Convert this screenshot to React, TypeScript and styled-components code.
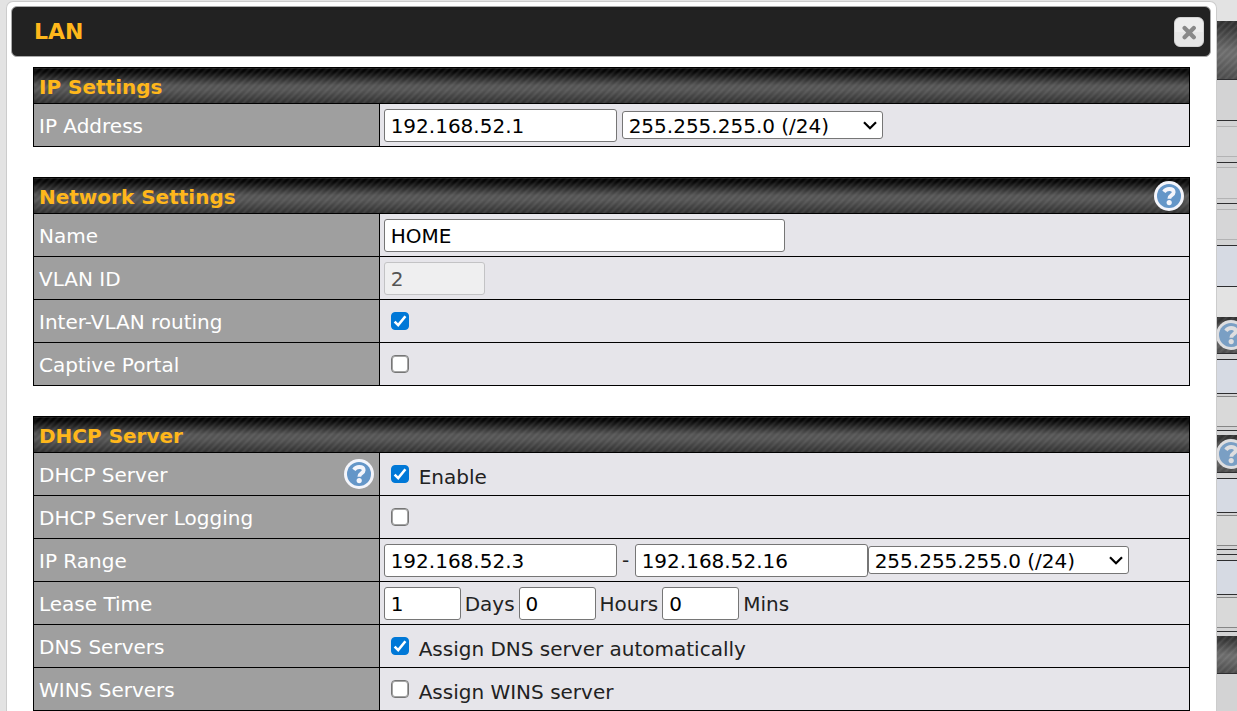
import React from 'react';
import styled, { createGlobalStyle, css } from 'styled-components';

const GlobalStyle = createGlobalStyle`
  *, *::before, *::after { box-sizing: border-box; }
  body {
    margin: 0;
    background: #e3e3e3;
    color: #222;
    font-family: Verdana, 'DejaVu Sans', sans-serif;
    font-size: 20px;
    line-height: 24px;
  }
`;

const stripes = 'repeating-linear-gradient(135deg, transparent 0, rgba(255, 255, 255, 0.09) 2px, transparent 4px, transparent 5px)';

const brushedMetal = css`
  background: ${stripes}, linear-gradient(#000 0%, #060606 10%, #535353 48%, #535353 62%, #2e2e2e 100%);
`;

const Page = styled.div`
  display: grid;
  grid-template-columns: 6px minmax(0, 1fr) 20px;
  min-height: 100vh;
`;

const Dialog = styled.section`
  grid-column: 2;
  margin-top: 1px;
  padding: 4px 5px 0 4px;
  background: #fff;
  border: 1px solid #ccc;
  border-bottom: 0;
  border-radius: 7px 7px 0 0;
`;

const TitleBar = styled.header`
  display: flex;
  align-items: center;
  justify-content: space-between;
  height: 51px;
  padding: 0 6px 0 22px;
  background: #222;
  border: 1px solid #aaa;
  border-radius: 6px;
`;

const Title = styled.h1`
  margin: 0;
  color: #ffb71b;
  font-size: 22px;
  font-weight: 700;
`;

const CloseButton = styled.button`
  display: flex;
  align-items: center;
  justify-content: center;
  width: 30px;
  height: 30px;
  padding: 0;
  background: linear-gradient(#ededed 50%, #e6e6e6 50%);
  border: 1px solid #d3d3d3;
  border-radius: 6px;
`;

const Content = styled.main`
  display: flex;
  flex-direction: column;
  gap: 30px;
  padding: 10px 21px 0 22px;
`;

const Table = styled.table`
  width: 100%;
  table-layout: fixed;
  border-collapse: collapse;
`;

const LabelColumn = styled.col`
  width: 29.9%;
`;

const SectionHeading = styled.th`
  height: 36px;
  padding: 0 5px;
  border: 1px solid #000;
  color: #ffb71b;
  text-align: left;
  ${brushedMetal}
`;

const LabelCell = styled.th`
  height: 43px;
  padding: 0 5px;
  border: 1px solid #000;
  background: #9f9f9f;
  color: #fff;
  font-weight: 400;
  text-align: left;
`;

const FieldCell = styled.td`
  padding: 0 4px;
  border: 1px solid #000;
  background: #e6e5ea;
`;

const Spread = styled.div`
  display: flex;
  align-items: center;
  justify-content: space-between;
`;

const Caption = styled.span`
  padding-top: 2px;
`;

const Fields = styled.div<{ $gap?: number }>`
  display: flex;
  align-items: center;
  gap: ${({ $gap = 5 }) => $gap}px;
`;

const Unit = styled.label`
  padding-top: 2px;
`;

const Dash = styled.span`
  width: 8px;
  text-align: center;
`;

const HelpButton = styled.button`
  display: flex;
  padding: 0;
  background: none;
  border: 0;
`;

const TextInput = styled.input<{ $width: number }>`
  width: ${({ $width }) => $width}px;
  height: 33px;
  padding: 2px 6px 0;
  background: #fff;
  border: 1px solid #767676;
  border-radius: 3px;
  color: #000;
  font: inherit;

  &:disabled {
    background: #efeff0;
    border-color: #c3c3c5;
    color: #545454;
  }
`;

const SelectBox = styled.div`
  position: relative;
  display: flex;

  svg {
    position: absolute;
    top: 10px;
    right: 6px;
    pointer-events: none;
  }
`;

const Select = styled.select`
  appearance: none;
  width: 261px;
  height: 28px;
  padding: 2px 6px 0;
  background: #fff;
  border: 1px solid #767676;
  border-radius: 3px;
  color: #000;
  font: inherit;
`;

const CheckRow = styled.div`
  display: flex;
  align-items: center;
  gap: 10px;
  padding-left: 7px;
`;

const CheckBoxFrame = styled.span`
  display: grid;

  > * {
    grid-area: 1 / 1;
  }

  svg {
    pointer-events: none;
  }
`;

const CheckboxInput = styled.input`
  appearance: none;
  width: 18px;
  height: 18px;
  margin: 0;
  background: #fff;
  border: 1px solid #767676;
  border-radius: 4px;
  box-shadow: inset 0 0 0 1px #a5a5a5;

  &:checked {
    background: #0078d7;
    border-color: #0078d7;
    box-shadow: none;
  }

  &:not(:checked) + svg {
    visibility: hidden;
  }
`;

const CheckLabel = styled.label`
  padding-top: 6px;
`;

const Backdrop = styled.div`
  display: flex;
  flex-direction: column;
  overflow: hidden;
  background: #d3d3d4;
`;

const Block = styled.div<{ $height: number; $fill: string; $line?: string }>`
  flex: none;
  height: ${({ $height }) => $height}px;
  background: ${({ $fill }) => $fill};
  ${({ $line }) => $line && `border-bottom: 1px solid ${$line};`}
`;

const BackdropHeader = styled.div<{ $height: number }>`
  flex: none;
  display: flex;
  align-items: center;
  height: ${({ $height }) => $height}px;
  overflow: hidden;
  border-bottom: 1px solid #2e2e30;
  background: ${stripes}, linear-gradient(#303030 0%, #353535 10%, #6a6a6a 50%, #6a6a6a 60%, #4b4b4b 100%);

  svg {
    flex: none;
  }
`;

function HelpIcon({ muted = false }: { muted?: boolean }) {
  const ring = muted ? '#dedee0' : '#f4f5fb';
  return (
    <svg width="30" height="30" viewBox={muted ? '1 0 30 30' : '0 0 30 30'} aria-hidden="true">
      <circle cx="15" cy="15" r="15" fill={ring} />
      <circle cx="15" cy="15" r="12" fill={muted ? '#7a9fc4' : '#6496c8'} />
      <path
        d="M9.9 10.9C11.2 8.9 13 8 15.2 8C17.9 8 19.7 9.3 19.7 11.3C19.7 14.3 15.3 14 15.3 17.8"
        fill="none"
        stroke={ring}
        strokeWidth="3.8"
      />
      <circle cx="15.2" cy="21.6" r="2.6" fill={ring} />
    </svg>
  );
}

function Help({ topic }: { topic: string }) {
  return (
    <HelpButton type="button" aria-label={`Help: ${topic}`}>
      <HelpIcon />
    </HelpButton>
  );
}

function Checkbox({ id, defaultChecked }: { id: string; defaultChecked?: boolean }) {
  return (
    <CheckBoxFrame>
      <CheckboxInput type="checkbox" id={id} defaultChecked={defaultChecked} />
      <svg width="18" height="18" viewBox="0 0 18 18" aria-hidden="true">
        <path d="M3.6 9.6L7.2 13.1L14.4 4.2" fill="none" stroke="#fff" strokeWidth="2.6" />
      </svg>
    </CheckBoxFrame>
  );
}

function Section({ title, help, children }: { title: string; help?: boolean; children: React.ReactNode }) {
  return (
    <Table>
      <colgroup>
        <LabelColumn />
        <col />
      </colgroup>
      <thead>
        <tr>
          <SectionHeading colSpan={2} scope="colgroup">
            <Spread>
              <Caption>{title}</Caption>
              {help && <Help topic={title} />}
            </Spread>
          </SectionHeading>
        </tr>
      </thead>
      <tbody>{children}</tbody>
    </Table>
  );
}

type RowProps = { label: string; htmlFor?: string; help?: boolean; children: React.ReactNode };

function Row({ label, htmlFor, help, children }: RowProps) {
  return (
    <tr>
      <LabelCell scope="row">
        <Spread>
          <Caption>{htmlFor ? <label htmlFor={htmlFor}>{label}</label> : label}</Caption>
          {help && <Help topic={label} />}
        </Spread>
      </LabelCell>
      <FieldCell>{children}</FieldCell>
    </tr>
  );
}

function MaskSelect({ label }: { label: string }) {
  return (
    <SelectBox>
      <Select aria-label={label} defaultValue="24">
        <option value="24">255.255.255.0 (/24)</option>
      </Select>
      <svg width="14" height="9" viewBox="0 0 14 9" aria-hidden="true">
        <path d="M1 1.2L7 7.2L13 1.2" fill="none" stroke="#000" strokeWidth="2.2" />
      </svg>
    </SelectBox>
  );
}

const dark = '#2e2e30';
const light = '#b3b3b4';
const mid = '#868686';
const blue = '#d6dae3';
const pale = '#e3e3e3';
const band = '#d3d3d4';
const cell = '#d6d6d7';
const field = '#d9d9d9';

type Part = { h: number; fill?: string; line?: string; header?: boolean; icon?: boolean };

const backdropParts: Part[] = [
  { h: 21, fill: pale },
  { h: 59, header: true },
  { h: 41, line: dark },
  { h: 6, line: light },
  { h: 30, fill: cell, line: light },
  { h: 6, line: dark },
  { h: 5, line: light },
  { h: 31, fill: cell, line: light },
  { h: 5, line: dark },
  { h: 6, line: light },
  { h: 30, fill: cell, line: light },
  { h: 6, line: dark },
  { h: 41, fill: blue, line: dark },
  { h: 30, fill: pale },
  { h: 37, header: true, icon: true },
  { h: 6, line: dark },
  { h: 34, fill: blue, line: dark },
  { h: 3, line: mid },
  { h: 30, fill: field, line: mid },
  { h: 4, line: dark },
  { h: 4 },
  { h: 38, header: true, icon: true },
  { h: 6, line: dark },
  { h: 34, fill: blue, line: dark },
  { h: 3, line: mid },
  { h: 30, fill: field, line: mid },
  { h: 4, line: dark },
  { h: 5, line: dark },
  { h: 6, line: dark },
  { h: 34, fill: blue, line: dark },
  { h: 3, line: mid },
  { h: 30, fill: field, line: mid },
  { h: 4, line: dark },
  { h: 4 },
  { h: 38, header: true },
];

export default function App() {
  return (
    <>
      <GlobalStyle />
      <Page>
        <Dialog role="dialog" aria-labelledby="dialog-title">
          <TitleBar>
            <Title id="dialog-title">LAN</Title>
            <CloseButton type="button" aria-label="Close">
              <svg width="16" height="16" viewBox="0 0 16 16" aria-hidden="true">
                <path d="M3.6 4L12.8 13.2M12.8 4L3.6 13.2" stroke="#888" strokeWidth="4.2" strokeLinecap="round" />
              </svg>
            </CloseButton>
          </TitleBar>
          <Content>
            <Section title="IP Settings">
              <Row label="IP Address" htmlFor="ip">
                <Fields>
                  <TextInput id="ip" $width={233} defaultValue="192.168.52.1" />
                  <MaskSelect label="Subnet mask" />
                </Fields>
              </Row>
            </Section>
            <Section title="Network Settings" help>
              <Row label="Name" htmlFor="name">
                <Fields>
                  <TextInput id="name" $width={401} defaultValue="HOME" />
                </Fields>
              </Row>
              <Row label="VLAN ID" htmlFor="vlan">
                <Fields>
                  <TextInput id="vlan" $width={101} defaultValue="2" disabled />
                </Fields>
              </Row>
              <Row label="Inter-VLAN routing" htmlFor="routing">
                <CheckRow>
                  <Checkbox id="routing" defaultChecked />
                </CheckRow>
              </Row>
              <Row label="Captive Portal" htmlFor="portal">
                <CheckRow>
                  <Checkbox id="portal" />
                </CheckRow>
              </Row>
            </Section>
            <Section title="DHCP Server">
              <Row label="DHCP Server" help>
                <CheckRow>
                  <Checkbox id="dhcp" defaultChecked />
                  <CheckLabel htmlFor="dhcp">Enable</CheckLabel>
                </CheckRow>
              </Row>
              <Row label="DHCP Server Logging" htmlFor="logging">
                <CheckRow>
                  <Checkbox id="logging" />
                </CheckRow>
              </Row>
              <Row label="IP Range" htmlFor="range-start">
                <Fields $gap={0}>
                  <Fields>
                    <TextInput id="range-start" $width={233} defaultValue="192.168.52.3" />
                    <Dash>-</Dash>
                    <TextInput aria-label="IP range end" $width={233} defaultValue="192.168.52.16" />
                  </Fields>
                  <MaskSelect label="Range subnet mask" />
                </Fields>
              </Row>
              <Row label="Lease Time">
                <Fields $gap={4}>
                  <TextInput id="days" $width={77} defaultValue="1" />
                  <Unit htmlFor="days">Days</Unit>
                  <TextInput id="hours" $width={77} defaultValue="0" />
                  <Unit htmlFor="hours">Hours</Unit>
                  <TextInput id="mins" $width={77} defaultValue="0" />
                  <Unit htmlFor="mins">Mins</Unit>
                </Fields>
              </Row>
              <Row label="DNS Servers">
                <CheckRow>
                  <Checkbox id="dns" defaultChecked />
                  <CheckLabel htmlFor="dns">Assign DNS server automatically</CheckLabel>
                </CheckRow>
              </Row>
              <Row label="WINS Servers">
                <CheckRow>
                  <Checkbox id="wins" />
                  <CheckLabel htmlFor="wins">Assign WINS server</CheckLabel>
                </CheckRow>
              </Row>
            </Section>
          </Content>
        </Dialog>
        <Backdrop aria-hidden="true">
          {backdropParts.map((part, i) =>
            part.header ? (
              <BackdropHeader key={i} $height={part.h}>
                {part.icon && <HelpIcon muted />}
              </BackdropHeader>
            ) : (
              <Block key={i} $height={part.h} $fill={part.fill ?? band} $line={part.line} />
            ),
          )}
        </Backdrop>
      </Page>
    </>
  );
}
